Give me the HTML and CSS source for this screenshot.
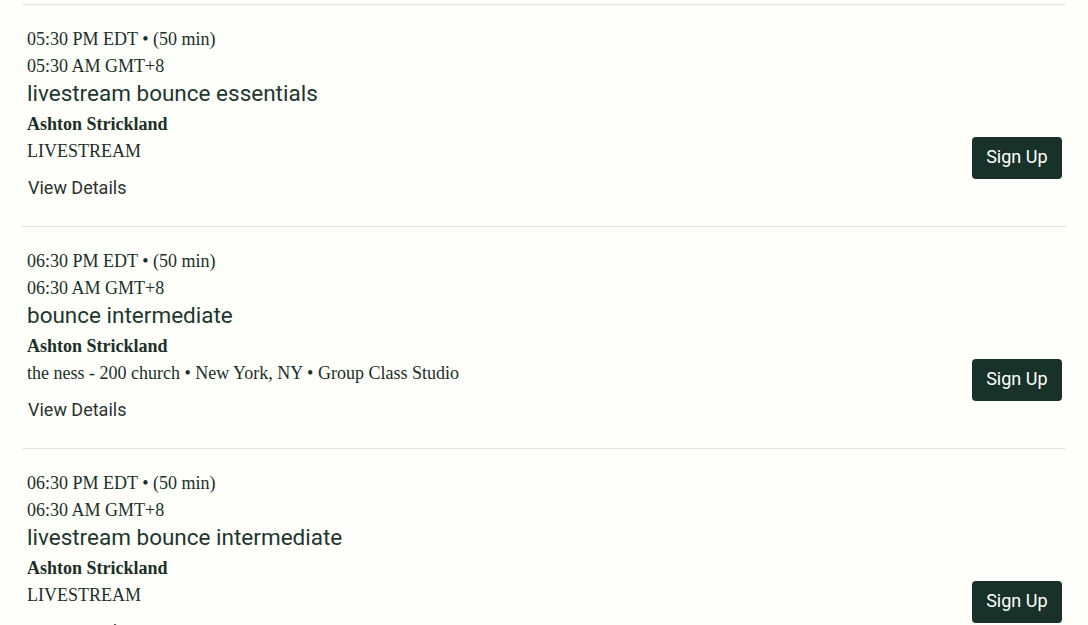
FILE: index.html
```html
<!DOCTYPE html>
<html lang="en">
<head>
<meta charset="utf-8">
<title>Schedule</title>
<link rel="stylesheet" href="styles.css">
</head>
<body>
<div class="list">
  <div class="row">
    <div class="info">
      <div class="time">05:30 PM EDT • (50 min)</div>
      <div class="time">05:30 AM GMT+8</div>
      <div class="title">livestream bounce essentials</div>
      <div class="instructor">Ashton Strickland</div>
      <div class="location">LIVESTREAM</div>
      <a class="details" href="#">View Details</a>
    </div>
    <button class="signup">Sign Up</button>
  </div>
  <div class="row">
    <div class="info">
      <div class="time">06:30 PM EDT • (50 min)</div>
      <div class="time">06:30 AM GMT+8</div>
      <div class="title">bounce intermediate</div>
      <div class="instructor">Ashton Strickland</div>
      <div class="location">the ness - 200 church • New York, NY • Group Class Studio</div>
      <a class="details" href="#">View Details</a>
    </div>
    <button class="signup">Sign Up</button>
  </div>
  <div class="row">
    <div class="info">
      <div class="time">06:30 PM EDT • (50 min)</div>
      <div class="time">06:30 AM GMT+8</div>
      <div class="title">livestream bounce intermediate</div>
      <div class="instructor">Ashton Strickland</div>
      <div class="location">LIVESTREAM</div>
      <a class="details" href="#">View Details</a>
    </div>
    <button class="signup">Sign Up</button>
  </div>
</div>
</body>
</html>
```
FILE: styles.css
```css
html, body {
  margin: 0;
  padding: 0;
  background: #fefefa;
}
body {
  font-family: "Liberation Serif", "Times New Roman", serif;
  color: #1b2f29;
}
.list {
  margin: 0 22px;
  padding-top: 4px;
}
.row {
  display: flex;
  justify-content: space-between;
  border-top: 1px solid #e4e4df;
  padding: 21px 4px 25px 5px;
}
.info {
  display: flex;
  flex-direction: column;
  align-items: flex-start;
}
.time, .instructor, .location {
  font-size: 18px;
  line-height: 27px;
}
.instructor {
  font-weight: bold;
  margin-top: 4px;
}
.title {
  font-family: Roboto, "Liberation Sans", sans-serif;
  font-size: 22.5px;
  line-height: 27px;
  color: #1e3630;
}
.details {
  font-family: Roboto, "Liberation Sans", sans-serif;
  font-size: 18px;
  line-height: 27px;
  margin-top: 9px;
  padding-left: 1px;
  color: #2a3431;
  text-decoration: none;
}
.signup {
  align-self: flex-end;
  margin-bottom: 22px;
  font-family: Roboto, "Liberation Sans", sans-serif;
  font-size: 18px;
  line-height: 24px;
  padding: 8px 14.5px 10px;
  border: none;
  border-radius: 4px;
  background: #183229;
  color: #ffffff;
  cursor: pointer;
}
```
